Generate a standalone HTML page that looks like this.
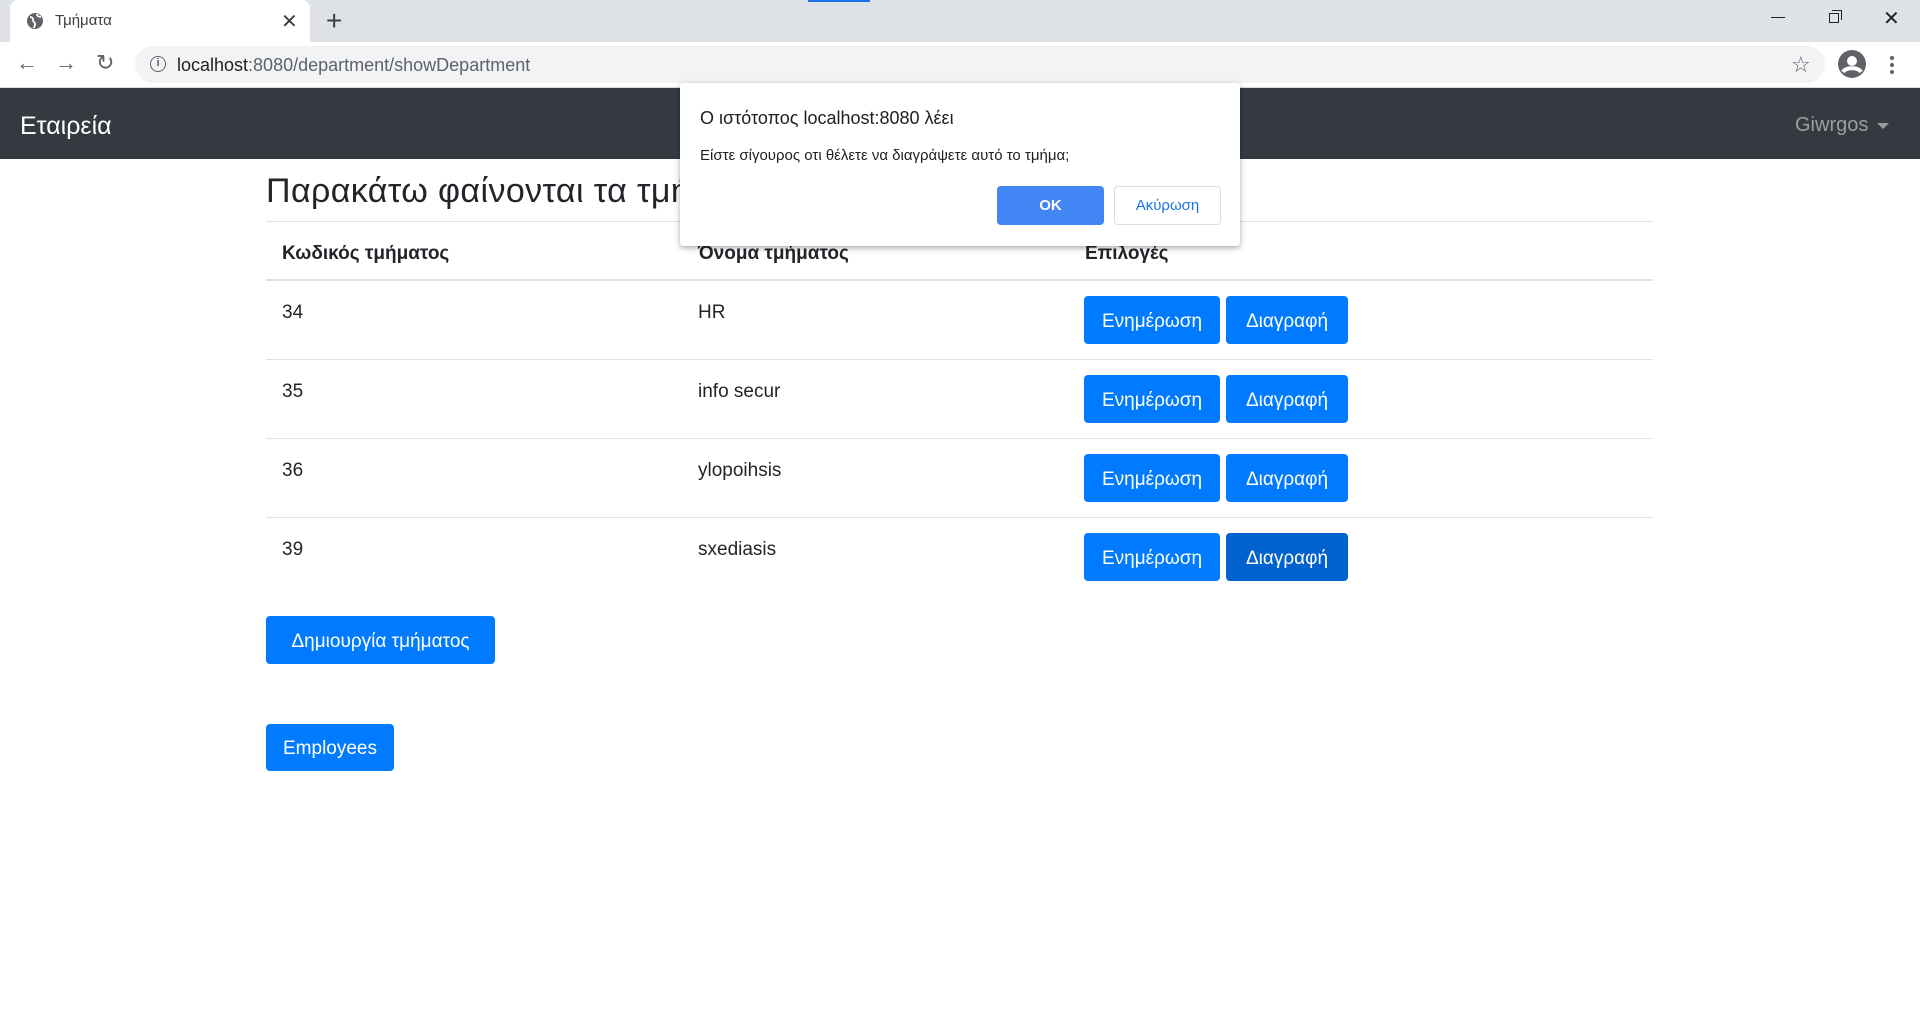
<!DOCTYPE html>
<html><head><meta charset="utf-8"><style>
*{margin:0;padding:0;box-sizing:border-box}
body{width:1920px;height:1028px;position:relative;background:#fff;font-family:"Liberation Sans","DejaVu Sans",sans-serif;color:#212529;overflow:hidden}
.a{position:absolute}
.btn{position:absolute;background:#007bff;color:#fff;border-radius:4px;font-size:19px;display:flex;align-items:center;justify-content:center;white-space:nowrap;padding-top:3px}
.td{position:absolute;font-size:19px;color:#212529}
.line{position:absolute;left:266px;width:1387px;height:1px;background:#dee2e6}
</style></head><body>
<!-- tab bar -->
<div class="a" style="left:0;top:0;width:1920px;height:42px;background:#dee1e6"></div>
<div class="a" style="left:808px;top:0;width:62px;height:2px;background:#1a73e8"></div>
<div class="a" style="left:10px;top:0;width:300px;height:42px;background:#fff;border-radius:8px 8px 0 0"></div>
<svg class="a" style="left:26px;top:12px" width="18" height="18" viewBox="0 0 18 18"><circle cx="9" cy="9" r="8" fill="#5f6368"/><path d="M4 5c2 0 3 1 3 3s2 2 2 4-1 3-1 4M11 2c0 2 2 3 4 3" stroke="#fff" stroke-width="1.8" fill="none"/></svg>
<div class="a" style="left:55px;top:12px;font-size:15px;color:#3c4043">Τμήματα</div>
<div class="a" style="left:281px;top:9px;font-size:20px;color:#3c4043">✕</div>
<div class="a" style="left:326px;top:5px;font-size:28px;color:#3c4043;font-weight:300">+</div>
<div class="a" style="left:1771px;top:17px;width:14px;height:1px;background:#222"></div>
<div class="a" style="left:1829px;top:13px;width:10px;height:10px;border:1px solid #222"></div>
<div class="a" style="left:1832px;top:10px;width:10px;height:10px;border-top:1px solid #222;border-right:1px solid #222"></div>
<div class="a" style="left:1883px;top:6px;font-size:20px;color:#222">✕</div>
<!-- address bar -->
<div class="a" style="left:0;top:42px;width:1920px;height:46px;background:#fff;border-bottom:1px solid #dadce0"></div>
<div class="a" style="left:16px;top:50px;font-size:22px;color:#5f6368">←</div>
<div class="a" style="left:55px;top:50px;font-size:22px;color:#5f6368">→</div>
<div class="a" style="left:96px;top:50px;font-size:22px;color:#5f6368">↻</div>
<div class="a" style="left:135px;top:46px;width:1690px;height:37px;background:#f1f3f4;border-radius:19px"></div>
<div class="a" style="left:150px;top:56px;width:16px;height:16px;border:1.5px solid #5f6368;border-radius:50%;font-size:11px;text-align:center;line-height:13px;color:#5f6368;font-weight:bold">i</div>
<div class="a" style="left:177px;top:55px;font-size:18px;color:#202124">localhost<span style="color:#5f6368">:8080/department/showDepartment</span></div>
<div class="a" style="left:1791px;top:52px;font-size:22px;color:#5f6368">☆</div>
<svg class="a" style="left:1838px;top:50px" width="28" height="28" viewBox="0 0 28 28"><circle cx="14" cy="14" r="14" fill="#5f6368"/><circle cx="14" cy="11" r="5" fill="#fff"/><path d="M5 22c3-5 15-5 18 0" stroke="#fff" stroke-width="4" fill="none"/></svg>
<div class="a" style="left:1890px;top:56px;width:4px;height:4px;border-radius:2px;background:#5f6368;box-shadow:0 7px 0 #5f6368,0 14px 0 #5f6368"></div>
<!-- navbar -->
<div class="a" style="left:0;top:88px;width:1920px;height:71px;background:#343a40"></div>
<div class="a" style="left:20px;top:112px;font-size:25px;color:#fff">Εταιρεία</div>
<div class="a" style="left:1795px;top:114px;font-size:20px;color:rgba(255,255,255,.5)">Giwrgos</div>
<div class="a" style="left:1877px;top:123px;width:0;height:0;border-left:6px solid transparent;border-right:6px solid transparent;border-top:6px solid rgba(255,255,255,.5)"></div>
<!-- content -->
<div class="a" style="left:266px;top:172px;font-size:34px;color:#212529;letter-spacing:0.4px">Παρακάτω φαίνονται τα τμήματα</div>
<div class="line" style="top:221px"></div>
<div class="td" style="left:282px;top:243px;font-weight:bold">Κωδικός τμήματος</div>
<div class="td" style="left:698px;top:243px;font-weight:bold">Όνομα τμήματος</div>
<div class="td" style="left:1085px;top:243px;font-weight:bold">Επιλογές</div>
<div class="line" style="top:279px;height:2px"></div>

<div class="td" style="left:282px;top:302px">34</div><div class="td" style="left:698px;top:302px">HR</div>
<div class="btn" style="left:1084px;top:296px;width:136px;height:48px">Ενημέρωση</div>
<div class="btn" style="left:1226px;top:296px;width:122px;height:48px">Διαγραφή</div>
<div class="line" style="top:359px"></div>
<div class="td" style="left:282px;top:381px">35</div><div class="td" style="left:698px;top:381px">info secur</div>
<div class="btn" style="left:1084px;top:375px;width:136px;height:48px">Ενημέρωση</div>
<div class="btn" style="left:1226px;top:375px;width:122px;height:48px">Διαγραφή</div>
<div class="line" style="top:438px"></div>
<div class="td" style="left:282px;top:460px">36</div><div class="td" style="left:698px;top:460px">ylopoihsis</div>
<div class="btn" style="left:1084px;top:454px;width:136px;height:48px">Ενημέρωση</div>
<div class="btn" style="left:1226px;top:454px;width:122px;height:48px">Διαγραφή</div>
<div class="line" style="top:517px"></div>
<div class="td" style="left:282px;top:539px">39</div><div class="td" style="left:698px;top:539px">sxediasis</div>
<div class="btn" style="left:1084px;top:533px;width:136px;height:48px">Ενημέρωση</div>
<div class="btn" style="left:1226px;top:533px;width:122px;height:48px;background:#0062cc">Διαγραφή</div>

<div class="btn" style="left:266px;top:616px;width:229px;height:48px">Δημιουργία τμήματος</div>
<div class="btn" style="left:266px;top:724px;width:128px;height:47px">Employees</div>

<!-- dialog -->
<div class="a" style="left:680px;top:83px;width:560px;height:163px;background:#fff;border-radius:4px;box-shadow:0 2px 6px rgba(0,0,0,.35)"></div>
<div class="a" style="left:700px;top:108px;font-size:18px;color:#202124">Ο ιστότοπος localhost:8080 λέει</div>
<div class="a" style="left:700px;top:147px;font-size:15px;color:#202124">Είστε σίγουρος οτι θέλετε να διαγράψετε αυτό το τμήμα;</div>
<div class="a" style="left:997px;top:186px;width:107px;height:39px;background:#4285f4;border-radius:4px;color:#fff;font-size:15px;font-weight:bold;display:flex;align-items:center;justify-content:center">OK</div>
<div class="a" style="left:1114px;top:186px;width:107px;height:39px;background:#fff;border:1px solid #dadce0;border-radius:4px;color:#1a73e8;font-size:15px;display:flex;align-items:center;justify-content:center">Ακύρωση</div>
</body></html>
